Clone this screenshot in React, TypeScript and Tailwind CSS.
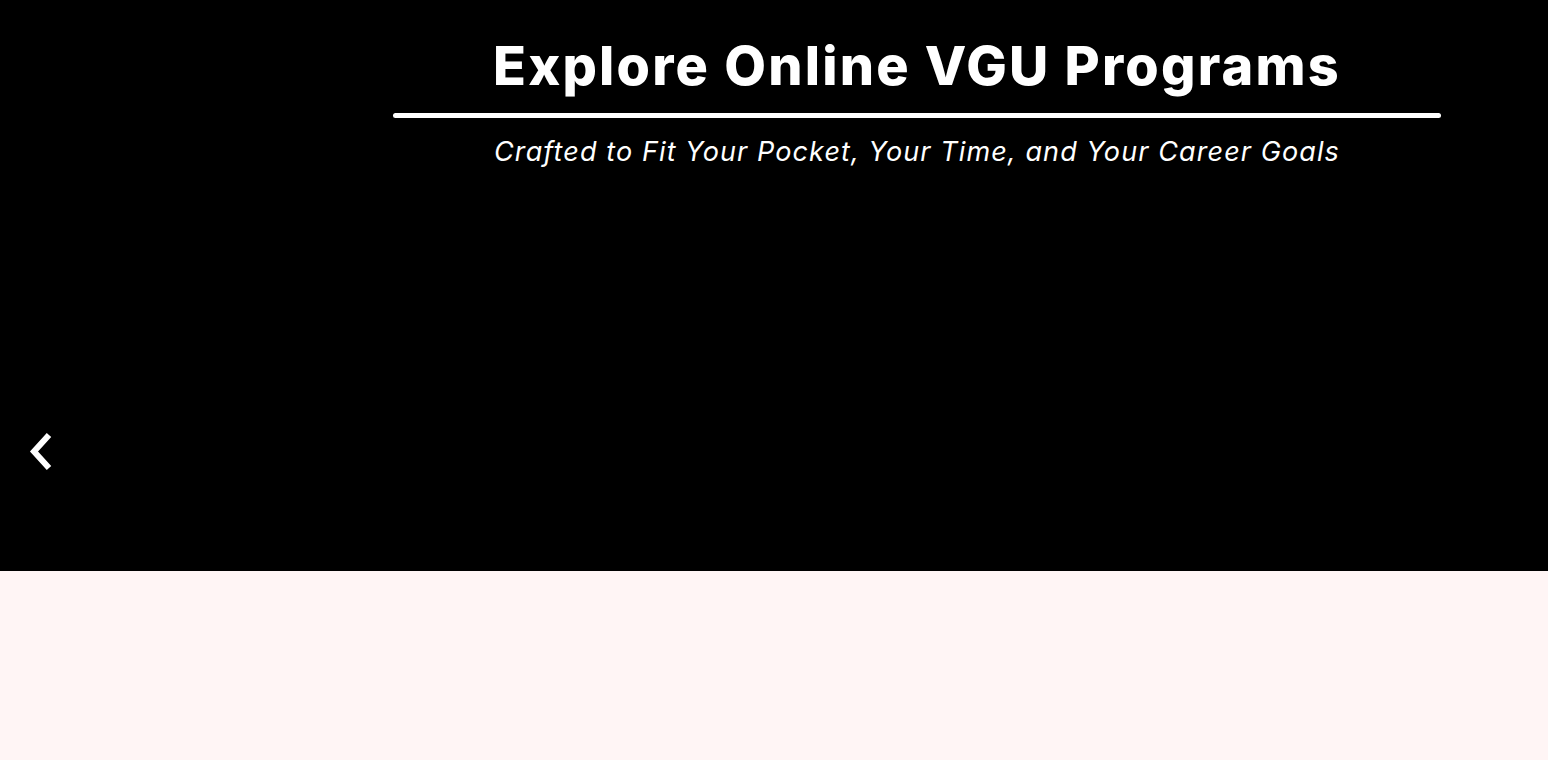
import React from "react";

export default function App() {
  return (
    <div className="w-full min-h-[760px] bg-[#fff5f5]">
      <section className="relative h-[571px] bg-black">
        <div className="grid grid-cols-[393px_1048px_1fr]">
          <div />
          <div className="flex flex-col items-center pt-[30px]">
            <h1
              className="text-white text-[54px] font-extrabold leading-[72px] tracking-[2.2px]"
              style={{ fontFamily: "Inter, 'Noto Sans', sans-serif" }}
            >
              Explore Online VGU Programs
            </h1>
            <div className="mt-[11px] h-[5px] w-full rounded-full bg-white" />
            <p
              className="mt-[16px] text-white text-[27px] italic leading-[36px] tracking-[1.1px]"
              style={{ fontFamily: "Inter, 'Noto Sans', sans-serif" }}
            >
              Crafted to Fit Your Pocket, Your Time, and Your Career Goals
            </p>
          </div>
          <div />
        </div>
        <button className="absolute left-[26px] top-[428px] text-white" aria-label="Previous">
          <svg width="30" height="46" viewBox="0 0 30 46">
            <path d="M23 7 L8 23.5 L23 40" fill="none" stroke="white" strokeWidth="6" strokeLinecap="butt" strokeLinejoin="miter" />
          </svg>
        </button>
      </section>
    </div>
  );
}
